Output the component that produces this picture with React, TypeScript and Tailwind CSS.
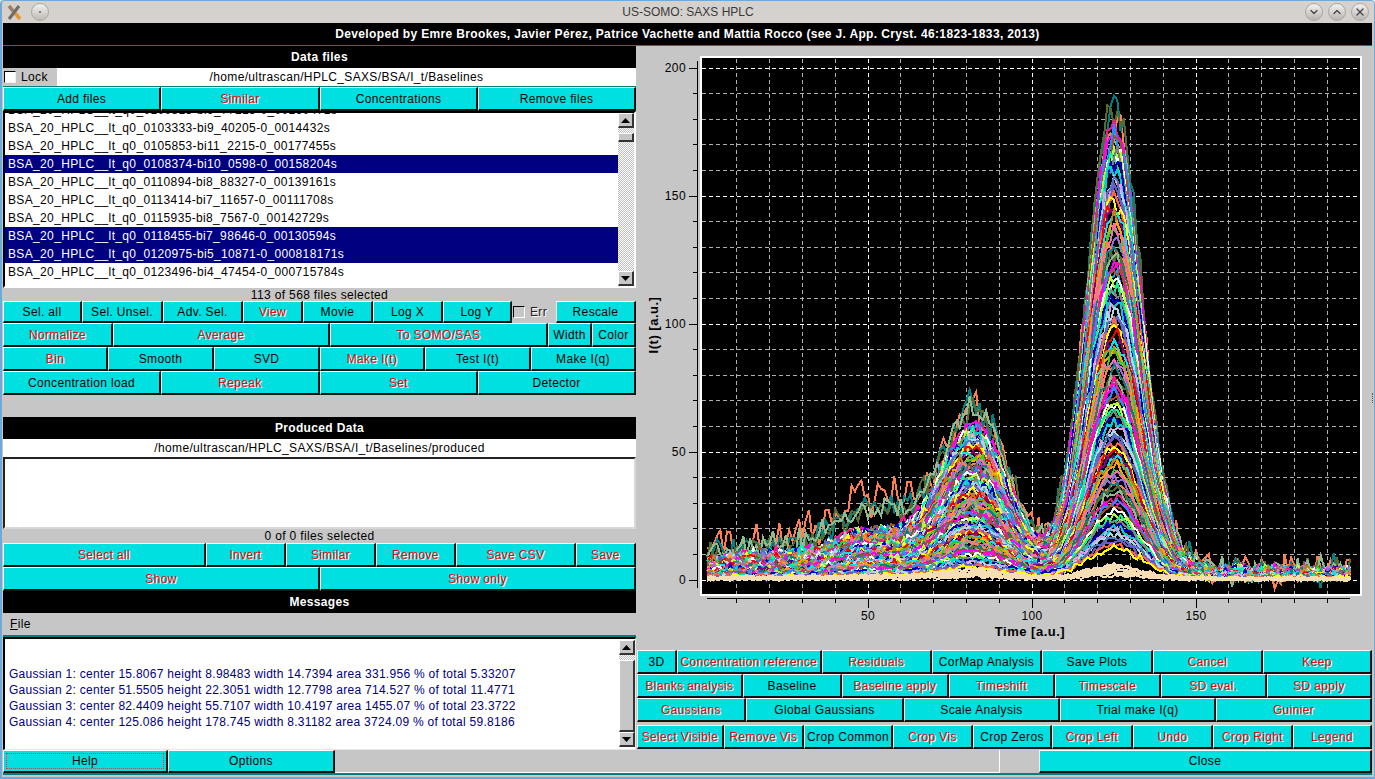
import { useMemo, type ReactNode } from "react";
import { ChevronDown, ChevronUp, X } from "lucide-react";

const FONT = "font-['Liberation_Sans',Arial,sans-serif] text-[12px] tracking-[0.35px]";

const Btn = ({ label, red, focus }: { label: string; red?: boolean; focus?: boolean }) => (
  <div
    className={
      "flex items-center justify-center whitespace-nowrap overflow-hidden bg-[#00e0e0] border-t border-l border-t-white border-l-white border-b-2 border-r-2 border-b-[#111] border-r-[#111] " +
      (red ? "text-[#ff0000] [text-shadow:1px_1px_0_#e8ffff]" : "text-black")
    }
  >
    {focus ? (
      <div className="flex flex-1 self-stretch items-center justify-center m-[2px] border border-dotted border-[#d84040]">
        {label}
      </div>
    ) : (
      label
    )}
  </div>
);

const Heading = ({ children }: { children: ReactNode }) => (
  <div className="h-[22px] bg-black text-white font-bold flex items-center justify-center">{children}</div>
);

const Arrow = ({ down }: { down?: boolean }) => (
  <div className="h-[15px] shrink-0 flex items-center justify-center bg-[#c6c6c6] border-t border-l border-white border-b-2 border-r-2 border-b-[#333] border-r-[#333]">
    <svg width="9" height="5" viewBox="0 0 9 5">
      <path d={down ? "M0 0H9L4.5 5Z" : "M4.5 0L9 5H0Z"} fill="#000" />
    </svg>
  </div>
);

const Dither = ({ className }: { className: string }) => (
  <div className={"bg-[repeating-conic-gradient(#c0c0c0_0_25%,#ffffff_0_50%)] bg-[length:2px_2px] " + className} />
);

const Scrollbar = ({ top, thumb }: { top: string; thumb: string }) => (
  <div className="w-[16px] shrink-0 flex flex-col">
    <Arrow />
    <Dither className={top} />
    <div className={"shrink-0 bg-[#c6c6c6] border-t border-l border-white border-b-2 border-r-2 border-b-[#333] border-r-[#333] " + thumb} />
    <Dither className="flex-1" />
    <Arrow down />
  </div>
);

const FILES = [
  { name: "BSA_20_HPLC__lt_q0_0100813-bi9_77213-0_00160471s" },
  { name: "BSA_20_HPLC__lt_q0_0103333-bi9_40205-0_0014432s" },
  { name: "BSA_20_HPLC__lt_q0_0105853-bi11_2215-0_00177455s" },
  { name: "BSA_20_HPLC__lt_q0_0108374-bi10_0598-0_00158204s", sel: true },
  { name: "BSA_20_HPLC__lt_q0_0110894-bi8_88327-0_00139161s" },
  { name: "BSA_20_HPLC__lt_q0_0113414-bi7_11657-0_00111708s" },
  { name: "BSA_20_HPLC__lt_q0_0115935-bi8_7567-0_00142729s" },
  { name: "BSA_20_HPLC__lt_q0_0118455-bi7_98646-0_00130594s", sel: true },
  { name: "BSA_20_HPLC__lt_q0_0120975-bi5_10871-0_000818171s", sel: true },
  { name: "BSA_20_HPLC__lt_q0_0123496-bi4_47454-0_000715784s" },
];

const MESSAGES = [
  "Gaussian 1: center 15.8067 height 8.98483 width 14.7394 area 331.956 % of total 5.33207",
  "Gaussian 2: center 51.5505 height 22.3051 width 12.7798 area 714.527 % of total 11.4771",
  "Gaussian 3: center 82.4409 height 55.7107 width 10.4197 area 1455.07 % of total 23.3722",
  "Gaussian 4: center 125.086 height 178.745 width 8.31182 area 3724.09 % of total 59.8186",
];

const PALETTE = [
  "#ff7f50", "#008080", "#556b2f", "#8fbc8f", "#ff1493", "#ff00ff", "#1e90ff", "#a0522d",
  "#ffffff", "#adff2f", "#00fa9a", "#808080", "#0000cd", "#00ced1", "#dda0dd", "#add8e6",
  "#4f74c0", "#6a5acd", "#ff6347", "#ffff00", "#ff0000", "#800080", "#00e5ee", "#b8860b",
  "#ffa500", "#32cd32", "#ff69b4", "#9370db",
];

const px = (v: number) => 868 + (v - 50) * 3.28;
const py = (v: number) => 580 - 2.56 * v;
const gauss = (x: number, c: number, w: number) => Math.exp(-((x - c) ** 2) / (2 * w * w));

const makeCurves = () => {
  let seed = 12345;
  const rnd = () => {
    seed = (seed + 0x6d2b79f5) | 0;
    let t = Math.imul(seed ^ (seed >>> 15), 1 | seed);
    t = (t + Math.imul(t ^ (t >>> 7), 61 | t)) ^ t;
    return ((t ^ (t >>> 14)) >>> 0) / 4294967296;
  };
  const noise = () => (rnd() + rnd() + rnd() - 1.5) * 1.4;
  const out: { color: string; points: string }[] = [];
  const total = 113;
  for (let i = 0; i < total; i++) {
    const s = 1.04 * Math.pow(1 - i / total, 1.2) + 0.012;
    const top = i < 4;
    const cream = i > total - 10;
    // the first few runs are much noisier and stand out over the rest
    const amp = i === 0 ? 5 : top ? 3.8 : cream ? 0.55 : 0.75 + 0.9 * s;
    const low = i === 0 ? 1.2 : top ? 1.0 : 0.68;
    const mid = i === 0 ? 1.05 : top ? 1.08 : 1.0;
    const high = cream ? 0.5 : i === 0 ? 0.94 : i < 3 ? 0.99 : 0.96;
    const pts: string[] = [];
    for (let x = 1; x <= 197; x++) {
      const sig =
        low * (8.98 * gauss(x, 15.8, 14.7) + 22.3 * gauss(x, 51.5, 12.8)) +
        mid * 55.7 * gauss(x, 82.4, 10.4) +
        high * 178.7 * gauss(x, 125.1, 8.3);
      const v = s * (sig + 3) + (cream ? 0.4 : 0.6) + noise() * (amp + 0.015 * s * sig);
      pts.push(px(x).toFixed(1) + "," + py(v).toFixed(1));
    }
    const color = cream ? "#f5deb3" : PALETTE[i % PALETTE.length];
    out.push({ color, points: pts.join(" ") });
  }
  return out;
};

const Plot = () => {
  const curves = useMemo(makeCurves, []);
  const xs = Array.from({ length: 19 }, (_, k) => (k + 1) * 10);
  const ys = Array.from({ length: 21 }, (_, k) => k * 10);
  return (
    <svg
      width="736"
      height="604"
      viewBox="636 46 736 604"
      className="block font-['Liberation_Sans',Arial,sans-serif]"
    >
      <rect x="701" y="57" width="660" height="538" fill="#000" stroke="#fff" strokeWidth="2" />
      {xs.map((v) => (
        <line
          key={v}
          x1={px(v)}
          x2={px(v)}
          y1="59"
          y2="594"
          stroke={v % 50 === 0 ? "#fff" : "#b0b0b0"}
          strokeDasharray="4 3"
          shapeRendering="crispEdges"
        />
      ))}
      {ys.map((v) => (
        <line
          key={v}
          x1="702"
          x2="1360"
          y1={py(v)}
          y2={py(v)}
          stroke={v % 50 === 0 ? "#fff" : "#b0b0b0"}
          strokeDasharray="4 3"
          shapeRendering="crispEdges"
        />
      ))}
      {curves.map((c, i) => (
        <polyline key={i} points={c.points} fill="none" stroke={c.color} strokeWidth="2" shapeRendering="crispEdges" />
      ))}

      <g stroke="#000" shapeRendering="crispEdges">
        <line x1="697.5" x2="697.5" y1="61" y2="588" />
        <line x1="707" x2="1350" y1="598.5" y2="598.5" />
        {ys.map((v) => (
          <line key={v} x1={v % 50 === 0 ? 689 : 693} x2="697" y1={py(v)} y2={py(v)} />
        ))}
        {xs.map((v) => (
          <line key={v} x1={px(v)} x2={px(v)} y1="598" y2={v % 50 === 0 ? 608 : 603} />
        ))}
      </g>
      <g fontSize="12" letterSpacing="0.4" fill="#000">
        {[0, 50, 100, 150, 200].map((v) => (
          <text key={v} x="686" y={py(v) + 4} textAnchor="end">
            {v}
          </text>
        ))}
        {[50, 100, 150].map((v) => (
          <text key={v} x={px(v)} y="620" textAnchor="middle">
            {v}
          </text>
        ))}
      </g>
      <text x="1030" y="636" textAnchor="middle" fontSize="13" fontWeight="700" letterSpacing="0.5">
        Time [a.u.]
      </text>
      <text
        transform="translate(658 325) rotate(-90)"
        textAnchor="middle"
        fontSize="13"
        fontWeight="700"
        letterSpacing="0.5"
      >
        I(t) [a.u.]
      </text>
    </svg>
  );
};

const WinButton = ({ children }: { children: ReactNode }) => (
  <div className="w-[18px] h-[18px] rounded-full flex items-center justify-center bg-gradient-to-b from-[#f4f2f0] to-[#b9b5b1] border border-[#aaa6a2] text-[#444]">
    {children}
  </div>
);

export default function App() {
  return (
    <div className={"w-[1375px] h-[779px] overflow-hidden flex flex-col bg-[#c6c6c6] border-t border-r border-l-2 border-b-2 border-[#6ea9d8] rounded-t-[4px] " + FONT}>
      {/* Title bar */}
      <div className="h-[22px] shrink-0 grid grid-cols-[1fr_auto_1fr] items-center bg-[#d5d1cd] text-[#3a3a3a] tracking-normal">
        <div className="flex items-center gap-[8px] pl-[4px]">
          <svg width="17" height="17" viewBox="0 0 17 17">
            <path d="M3 2L14 15" stroke="#e8962e" strokeWidth="3.5" />
            <path d="M13 2L3 15" stroke="#6f6a64" strokeWidth="3" />
            <path d="M3 2L7 7" stroke="#8a8580" strokeWidth="3" />
          </svg>
          <div className="w-[18px] h-[18px] rounded-full flex items-center justify-center bg-gradient-to-b from-[#f4f2f0] to-[#bdb9b5] border border-[#aaa6a2]">
            <div className="w-[2px] h-[2px] rounded-full bg-[#666]" />
          </div>
        </div>
        <div>US-SOMO: SAXS HPLC</div>
        <div className="flex justify-end gap-[5px] pr-[5px]">
          <WinButton><ChevronDown size={12} strokeWidth={2.5} /></WinButton>
          <WinButton><ChevronUp size={12} strokeWidth={2.5} /></WinButton>
          <WinButton><X size={12} strokeWidth={2.5} /></WinButton>
        </div>
      </div>

      <div className="flex-1 flex flex-col pl-px pr-[2px]">
        <div className="h-[23px] shrink-0 bg-black text-white font-bold flex items-center justify-center border-b border-[#007f7f]">
          Developed by Emre Brookes, Javier Pérez, Patrice Vachette and Mattia Rocco (see J. App. Cryst. 46:1823-1833, 2013)
        </div>

        <div className="flex h-[704px] shrink-0">
          {/* Left column */}
          <div className="w-[633px] shrink-0 flex flex-col">
            <Heading>Data files</Heading>
            <div className="h-[19px] flex border-b border-[#007f7f]">
              <div className="w-[54px] flex items-center gap-[5px] pl-px">
                <div className="w-[12px] h-[12px] bg-white border-t border-l border-black border-b border-r border-b-[#eee] border-r-[#eee]" />
                Lock
              </div>
              <div className="flex-1 bg-white flex items-center justify-center">/home/ultrascan/HPLC_SAXS/BSA/I_t/Baselines</div>
            </div>
            <div className="grid grid-cols-[158px_159px_158px_158px] h-[24px]">
              <Btn label="Add files" />
              <Btn label="Similar" red />
              <Btn label="Concentrations" />
              <Btn label="Remove files" />
            </div>
            <div className="h-[177px] flex border-t-2 border-l-2 border-black border-b-2 border-r-2 border-b-white border-r-white bg-white">
              <div className="flex-1 overflow-hidden">
                {FILES.map((f, i) => (
                  <div
                    key={f.name}
                    className={
                      "h-[18px] leading-[18px] pl-[3px] whitespace-nowrap " +
                      (i === 0 ? "-mt-[12px] " : "") +
                      (f.sel ? "bg-[#000080] text-white" : "text-black")
                    }
                  >
                    {f.name}
                  </div>
                ))}
              </div>
              <Scrollbar top="h-[5px]" thumb="h-[9px]" />
            </div>
            <div className="h-[13px] flex items-center justify-center text-black">113 of 568 files selected</div>
            <div className="grid grid-cols-[79px_81px_80px_60px_70px_70px_69px_44px_80px] h-[22px]">
              <Btn label="Sel. all" />
              <Btn label="Sel. Unsel." />
              <Btn label="Adv. Sel." />
              <Btn label="View" red />
              <Btn label="Movie" />
              <Btn label="Log X" />
              <Btn label="Log Y" />
              <div className="flex items-center gap-[5px] pl-px text-[#222] [text-shadow:1px_1px_0_#fff]">
                <div className="w-[12px] h-[12px] border-t border-l border-black border-b border-r border-b-white border-r-white" />
                Err
              </div>
              <Btn label="Rescale" />
            </div>
            <div className="grid grid-cols-[110px_217px_218px_44px_44px] h-[24px]">
              <Btn label="Normalize" red />
              <Btn label="Average" red />
              <Btn label="To SOMO/SAS" red />
              <Btn label="Width" />
              <Btn label="Color" />
            </div>
            <div className="grid grid-cols-[105px_106px_106px_105px_106px_105px] h-[24px]">
              <Btn label="Bin" red />
              <Btn label="Smooth" />
              <Btn label="SVD" />
              <Btn label="Make I(t)" red />
              <Btn label="Test I(t)" />
              <Btn label="Make I(q)" />
            </div>
            <div className="grid grid-cols-[158px_159px_158px_158px] h-[24px]">
              <Btn label="Concentration load" />
              <Btn label="Repeak" red />
              <Btn label="Set" red />
              <Btn label="Detector" />
            </div>

            <div className="mt-[22px]">
              <Heading>Produced Data</Heading>
            </div>
            <div className="h-[18px] bg-white flex items-center justify-center">/home/ultrascan/HPLC_SAXS/BSA/I_t/Baselines/produced</div>
            <div className="h-[72px] bg-white border-t-2 border-l-2 border-[#222] border-b-2 border-r-2 border-b-[#d8d8d8] border-r-[#d8d8d8]" />
            <div className="h-[14px] flex items-center justify-center">0 of 0 files selected</div>
            <div className="grid grid-cols-[203px_80px_90px_80px_120px_60px] h-[24px]">
              <Btn label="Select all" red />
              <Btn label="Invert" red />
              <Btn label="Similar" red />
              <Btn label="Remove" red />
              <Btn label="Save CSV" red />
              <Btn label="Save" red />
            </div>
            <div className="grid grid-cols-[317px_316px] h-[24px]">
              <Btn label="Show" red />
              <Btn label="Show only" red />
            </div>
            <Heading>Messages</Heading>
            <div className="h-[22px] flex items-center pl-[7px] border-b-2 border-[#007f7f] box-content">
              <span><span className="underline">F</span>ile</span>
            </div>
            <div className="flex-1 flex border-t-2 border-l-2 border-black border-b border-r border-b-[#e8e8e8] border-r-[#e8e8e8] bg-white min-h-0">
              <div className="flex-1 pt-[27px] pl-[4px] text-[#000080] leading-[16px] tracking-[0.28px]">
                {MESSAGES.map((m) => (
                  <div key={m} className="whitespace-nowrap">{m}</div>
                ))}
              </div>
              <div className="flex flex-col py-px">
                <Scrollbar top="h-[5px]" thumb="h-[72px]" />
              </div>
            </div>
          </div>

          {/* Right column */}
          <div className="w-[736px] shrink-0 flex flex-col">
            <Plot />
            <div className="pl-px h-[24px] grid grid-cols-[40px_145px_110px_110px_111px_110px_109px]">
              <Btn label="3D" />
              <Btn label="Concentration reference" red />
              <Btn label="Residuals" red />
              <Btn label="CorMap Analysis" />
              <Btn label="Save Plots" />
              <Btn label="Cancel" red />
              <Btn label="Keep" red />
            </div>
            <div className="pl-px h-[24px] grid grid-cols-[106px_99px_107px_106px_106px_106px_105px]">
              <Btn label="Blanks analysis" red />
              <Btn label="Baseline" />
              <Btn label="Baseline apply" red />
              <Btn label="Timeshift" red />
              <Btn label="Timescale" red />
              <Btn label="SD eval." red />
              <Btn label="SD apply" red />
            </div>
            <div className="pl-px h-[24px] grid grid-cols-[109px_158px_156px_156px_156px]">
              <Btn label="Gaussians" red />
              <Btn label="Global Gaussians" />
              <Btn label="Scale Analysis" />
              <Btn label="Trial make I(q)" />
              <Btn label="Guinier" red />
            </div>
            <div className="pl-px mt-[3px] h-[24px] grid grid-cols-[87px_80px_89px_80px_79px_81px_80px_80px_79px]">
              <Btn label="Select Visible" red />
              <Btn label="Remove Vis" red />
              <Btn label="Crop Common" />
              <Btn label="Crop Vis" red />
              <Btn label="Crop Zeros" />
              <Btn label="Crop Left" red />
              <Btn label="Undo" red />
              <Btn label="Crop Right" red />
              <Btn label="Legend" red />
            </div>
          </div>

          {/* Splitter handle */}
          <div className="w-[2px] flex items-center justify-center">
            <div className="h-[10px] border-l border-dotted border-[#555]" />
          </div>
        </div>

        {/* Bottom bar */}
        <div className="h-[25px] shrink-0 grid grid-cols-[165px_167px_665px_39px_333px] border-b-2 border-[#007f7f]">
          <Btn label="Help" focus />
          <Btn label="Options" />
          <div className="border-b border-r border-white" />
          <div />
          <Btn label="Close" />
        </div>
      </div>
    </div>
  );
}
